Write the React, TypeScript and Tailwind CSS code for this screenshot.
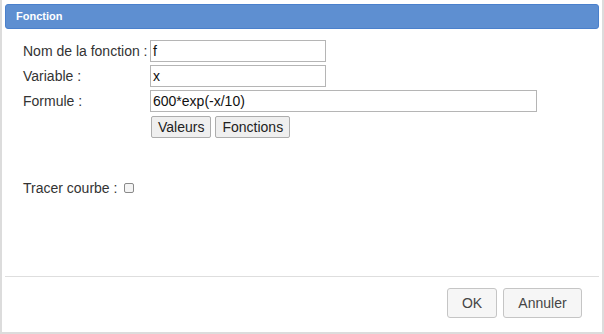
import React from "react";

const rows = [
  { label: "Nom de la fonction :", value: "f", width: "w-[176px]" },
  { label: "Variable :", value: "x", width: "w-[176px]" },
  { label: "Formule :", value: "600*exp(-x/10)", width: "w-[387px]" },
];

export default function App() {
  return (
    <div
      className="w-[604px] h-[334px] bg-white border-x-2 border-b-2 border-[#dcdcdc] flex flex-col text-[#333]"
      style={{ fontFamily: '"Liberation Sans", Arial, sans-serif' }}
    >
      {/* Title bar */}
      <div className="mx-[3px] mt-[4px] h-[25px] rounded-[3px] bg-[#5e8fd1] border border-[#4a80cc] flex items-center px-[10px]">
        <span className="text-white text-[11px] font-bold">Fonction</span>
      </div>

      {/* Form */}
      <div className="pl-[21px] pt-[11px] flex flex-col gap-[3px]">
        {rows.map((r) => (
          <div key={r.label} className="flex items-center h-[22px]">
            <span className="w-[127px] text-[14px] leading-none">{r.label}</span>
            <div
              className={`${r.width} h-[22px] border border-[#b5b5b5] bg-white flex items-center px-[2px] text-[14px] text-[#111]`}
            >
              {r.value}
            </div>
          </div>
        ))}
        <div className="flex gap-[4px] pl-[128px] mt-[1px]">
          <button className="h-[22px] px-[6px] border border-[#adadad] bg-[#efefef] rounded-[2px] text-[14px] text-[#222]">
            Valeurs
          </button>
          <button className="h-[22px] px-[6px] border border-[#adadad] bg-[#efefef] rounded-[2px] text-[14px] text-[#222]">
            Fonctions
          </button>
        </div>
      </div>

      <div className="pl-[21px] mt-[40px] flex items-center h-[20px]">
        <span className="text-[14px]">Tracer courbe :</span>
        <span className="ml-[7px] w-[10px] h-[10px] border border-[#8a8a8a] rounded-[2px] bg-[#f4f4f4]" />
      </div>

      <div className="flex-1" />

      {/* Footer */}
      <div className="mx-[3px] border-t border-[#dedede] h-[56px] flex items-start justify-end gap-[6px] pt-[11px] pr-[17px]">
        <button className="w-[50px] h-[30px] border border-[#c5c5c5] bg-[#f6f6f6] rounded-[3px] text-[14px] text-[#454545]">
          OK
        </button>
        <button className="w-[79px] h-[30px] border border-[#c5c5c5] bg-[#f6f6f6] rounded-[3px] text-[14px] text-[#454545]">
          Annuler
        </button>
      </div>
    </div>
  );
}
